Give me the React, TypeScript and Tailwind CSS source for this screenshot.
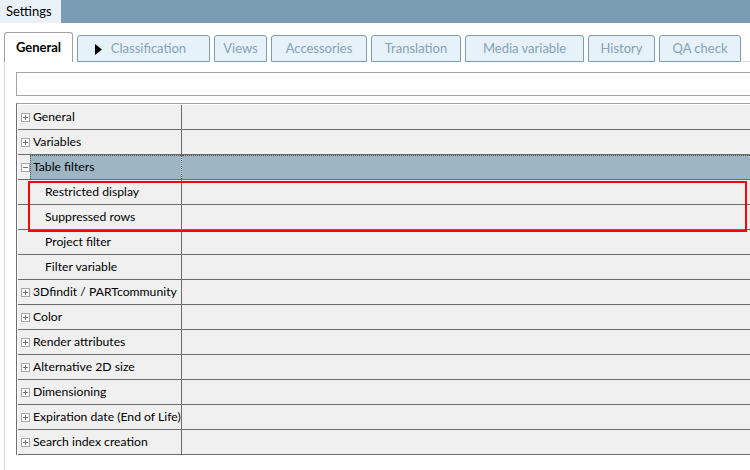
const rows: { label: string; kind: "plus" | "minus" | "child"; selected?: boolean }[] = [
  { label: "General", kind: "plus" },
  { label: "Variables", kind: "plus" },
  { label: "Table filters", kind: "minus", selected: true },
  { label: "Restricted display", kind: "child" },
  { label: "Suppressed rows", kind: "child" },
  { label: "Project filter", kind: "child" },
  { label: "Filter variable", kind: "child" },
  { label: "3Dfindit / PARTcommunity", kind: "plus" },
  { label: "Color", kind: "plus" },
  { label: "Render attributes", kind: "plus" },
  { label: "Alternative 2D size", kind: "plus" },
  { label: "Dimensioning", kind: "plus" },
  { label: "Expiration date (End of Life)", kind: "plus" },
  { label: "Search index creation", kind: "plus" },
];

const tabs = [
  { label: "Classification", w: "w-[133px]", arrow: true },
  { label: "Views", w: "w-[53px]" },
  { label: "Accessories", w: "w-[96px]" },
  { label: "Translation", w: "w-[90px]" },
  { label: "Media variable", w: "w-[119px]" },
  { label: "History", w: "w-[67px]" },
  { label: "QA check", w: "w-[82px]" },
];

function ExpandBox({ minus }: { minus?: boolean }) {
  return (
    <span className="relative block w-[9px] h-[9px] border border-[#a6a6a6] bg-white shrink-0">
      <span className="absolute block left-[1px] top-[3px] w-[5px] h-px bg-[#707070]" />
      {!minus && <span className="absolute block left-[3px] top-[1px] w-px h-[5px] bg-[#707070]" />}
    </span>
  );
}

export default function App() {
  return (
    <div className="w-[750px] h-[470px] overflow-hidden bg-white text-[12.2px] text-black whitespace-nowrap font-['Lato',sans-serif]">
      {/* title bar */}
      <div className="h-[23px] flex bg-[#7a9db3]">
        <div className="w-[61px] bg-[#eaf2f8] pl-[6px] leading-[23px] text-[13px]">Settings</div>
      </div>

      {/* tabs */}
      <div className="mt-[9px] h-[30px] flex items-end pl-[4px]">
        <div className="w-[69px] h-[30px] border border-b-0 border-[#a0a0a0] rounded-t-[3px] bg-white flex items-center justify-center font-bold text-[13px]">
          General
        </div>
        {tabs.map((t) => (
          <div
            key={t.label}
            className={`${t.w} ml-[4px] h-[27px] border border-[#7c9db1] rounded-t-[3px] bg-[#e6f1f9] text-[#86a2b6] text-[13px] flex items-center justify-center relative`}
          >
            {t.arrow && (
              <svg className="absolute left-[17px] top-[8px]" width="7" height="11" viewBox="0 0 7 11">
                <path d="M0 0 L7 5.5 L0 11 Z" fill="#000" />
              </svg>
            )}
            <span className={t.arrow ? "ml-[10px]" : ""}>{t.label}</span>
          </div>
        ))}
        <div className="flex-1 border-b border-[#d6d6d6]" />
      </div>

      {/* panel */}
      <div className="ml-[4px] border-l border-[#dadada] h-[410px] pl-[11px]">
        <div className="pt-[10px]">
          <div className="h-[24px] border border-r-0 border-[#a5a5a5]" />
        </div>
        <div className="relative mt-[7px] border-l border-t border-[#a0a0a0] border-l-[#6e6e6e] pl-[1px] pt-[1px]">
          {rows.map((r) => (
            <div key={r.label} className="h-[25px] flex border-b border-[#6b6b6b] bg-[#f0f0f0]">
              <div className={`w-[164px] shrink-0 flex items-center ${r.selected ? "border-r border-dotted border-[#555]" : "border-r border-[#6b6b6b]"}`}>
                {r.kind === "child" ? (
                  <span className="pl-[27px]">{r.label}</span>
                ) : (
                  <>
                    <span className="pl-[3px] flex items-center h-full">
                      <ExpandBox minus={r.kind === "minus"} />
                    </span>
                    <span
                      className={`h-full flex-1 flex items-center ${r.selected ? "bg-[#9eb6c3] border-t border-l border-dotted border-[#555] pl-[2px]" : "pl-[3px]"}`}
                    >
                      {r.label}
                    </span>
                  </>
                )}
              </div>
              <div className={`flex-1 ${r.selected ? "bg-[#9eb6c3] border-t border-dotted border-[#555]" : ""}`} />
            </div>
          ))}
          <div className="absolute left-[11px] top-[77px] w-[719px] h-[51px] border-2 border-[#ff0000] pointer-events-none" />
        </div>
      </div>
    </div>
  );
}
